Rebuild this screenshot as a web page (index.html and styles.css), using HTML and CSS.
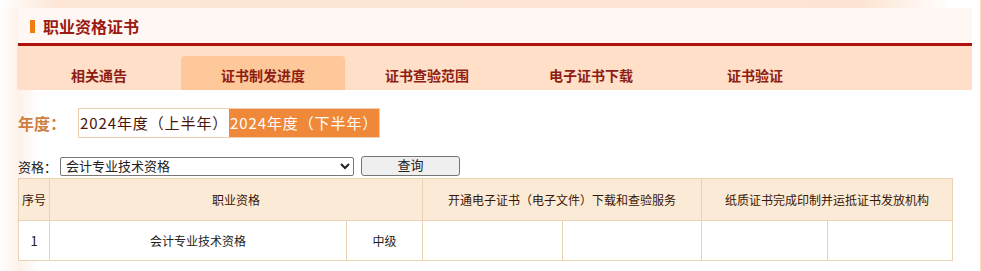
FILE: index.html
```html
<!DOCTYPE html>
<html lang="zh-CN">
<head>
<meta charset="utf-8">
<title>职业资格证书</title>
<link rel="stylesheet" href="styles.css">
</head>
<body>
<div class="page">
  <div class="topstrip"></div>
  <div class="content">
    <div class="titlebar">
      <span class="marker"></span>
      <h1 class="title">职业资格证书</h1>
    </div>
    <div class="redline"></div>
    <nav class="tabs">
      <a class="tab">相关通告</a>
      <a class="tab active">证书制发进度</a>
      <a class="tab">证书查验范围</a>
      <a class="tab">电子证书下载</a>
      <a class="tab">证书验证</a>
    </nav>
    <div class="year-row">
      <span class="year-label">年度：</span>
      <div class="year-box">
        <span class="year-opt">2024年度（上半年）</span>
        <span class="year-opt selected">2024年度（下半年）</span>
      </div>
    </div>
    <div class="filter-row">
      <label class="filter-label">资格：</label>
      <select class="filter-select"><option>会计专业技术资格</option></select>
      <button class="filter-btn">查询</button>
    </div>
    <table class="grid">
      <colgroup>
        <col style="width:31px"><col style="width:297px"><col style="width:76px">
        <col style="width:140px"><col style="width:139px"><col style="width:126px"><col style="width:125px">
      </colgroup>
      <thead>
        <tr>
          <th>序号</th>
          <th colspan="2">职业资格</th>
          <th colspan="2">开通电子证书（电子文件）下载和查验服务</th>
          <th colspan="2">纸质证书完成印制并运抵证书发放机构</th>
        </tr>
      </thead>
      <tbody>
        <tr>
          <td class="num">1</td>
          <td>会计专业技术资格</td>
          <td>中级</td>
          <td></td><td></td><td></td><td></td>
        </tr>
      </tbody>
    </table>
  </div>
</div>
</body>
</html>
```
FILE: styles.css
```css
html, body {
  margin: 0;
  padding: 0;
  background: #fff;
}
body {
  font-family: "Noto Sans CJK SC", "Noto Sans", sans-serif;
  color: #222;
}
.page {
  width: 980px;
  min-height: 271px;
  border-right: 1px solid #fbdcbd;
  background: linear-gradient(90deg, #fffdfc 0%, #fdf1ea 2%, #fff 4%, #fff 100%);
}
.topstrip {
  height: 8px;
  background: linear-gradient(90deg, #fff 0%, #fde6d6 6%, #fde4d2 88%, #fff 97%);
}
.content {
  margin-left: 18px;
  width: 954px;
}
.titlebar {
  height: 35px;
  background: #fff7f3;
  display: flex;
  align-items: center;
  padding-left: 12px;
  gap: 8px;
}
.marker {
  width: 5px;
  height: 13px;
  background: #ee7d14;
  margin-top: 1px;
}
.title {
  margin: 0;
  font-size: 16px;
  font-weight: bold;
  color: #9b1a12;
  line-height: 20px;
}
.redline {
  height: 3px;
  background: #af0f0d;
}
.tabs {
  height: 44px;
  background: #ffdfc8;
  display: flex;
  align-items: flex-end;
  margin-left: -1px;
}
.tab {
  width: 164px;
  height: 34px;
  box-sizing: border-box;
  padding-top: 5px;
  line-height: 28px;
  text-align: center;
  font-size: 14px;
  font-weight: bold;
  color: #8e1d13;
  border-radius: 4px 4px 0 0;
}
.tab.active {
  background: #ffc89a;
}
.year-row {
  display: flex;
  align-items: center;
  margin-top: 18px;
  height: 30px;
}
.year-label {
  width: 60px;
  font-size: 16px;
  font-weight: bold;
  color: #cf7f3f;
  line-height: 20px;
}
.year-box {
  display: flex;
  height: 30px;
  border: 1px solid #efcfb2;
  box-sizing: border-box;
}
.year-opt {
  width: 150px;
  box-sizing: border-box;
  padding-left: 1px;
  font-size: 15px;
  line-height: 28px;
  letter-spacing: 0.9px;
  color: #4a140a;
  background: #fff;
  white-space: nowrap;
  overflow: hidden;
}
.year-opt.selected {
  width: 150px;
  background: #f0883a;
  color: #fff;
}
.filter-row {
  display: flex;
  align-items: center;
  margin-top: 18px;
  height: 20px;
}
.filter-label {
  width: 42px;
  font-size: 13px;
  color: #222;
}
.filter-select {
  width: 294px;
  height: 19px;
  box-sizing: border-box;
  font-family: "Liberation Sans", "Noto Sans CJK SC", sans-serif;
  font-size: 13px;
  padding: 0 1px;
  border: 1px solid #767676;
  border-radius: 2px;
  background: #fff;
  color: #222;
}
.filter-btn {
  margin-left: 7px;
  width: 99px;
  height: 20px;
  padding: 0;
  font-family: "Liberation Sans", "Noto Sans CJK SC", sans-serif;
  font-size: 13px;
  line-height: 18px;
  color: #222;
  background: #efefef;
  border: 1px solid #767676;
  border-radius: 3px;
}
.grid {
  margin-top: 2px;
  border-collapse: collapse;
  width: 935px;
  table-layout: fixed;
  font-size: 12px;
}
.grid th, .grid td {
  border: 1px solid #ead3b5;
  text-align: center;
  padding: 0;
}
.grid th {
  height: 41px;
  background: #fbebd6;
  font-weight: normal;
  color: #3a1608;
}
.grid td {
  height: 39px;
  background: #fff;
  color: #222;
}
.grid td.num {
  font-size: 13px;
}
```
